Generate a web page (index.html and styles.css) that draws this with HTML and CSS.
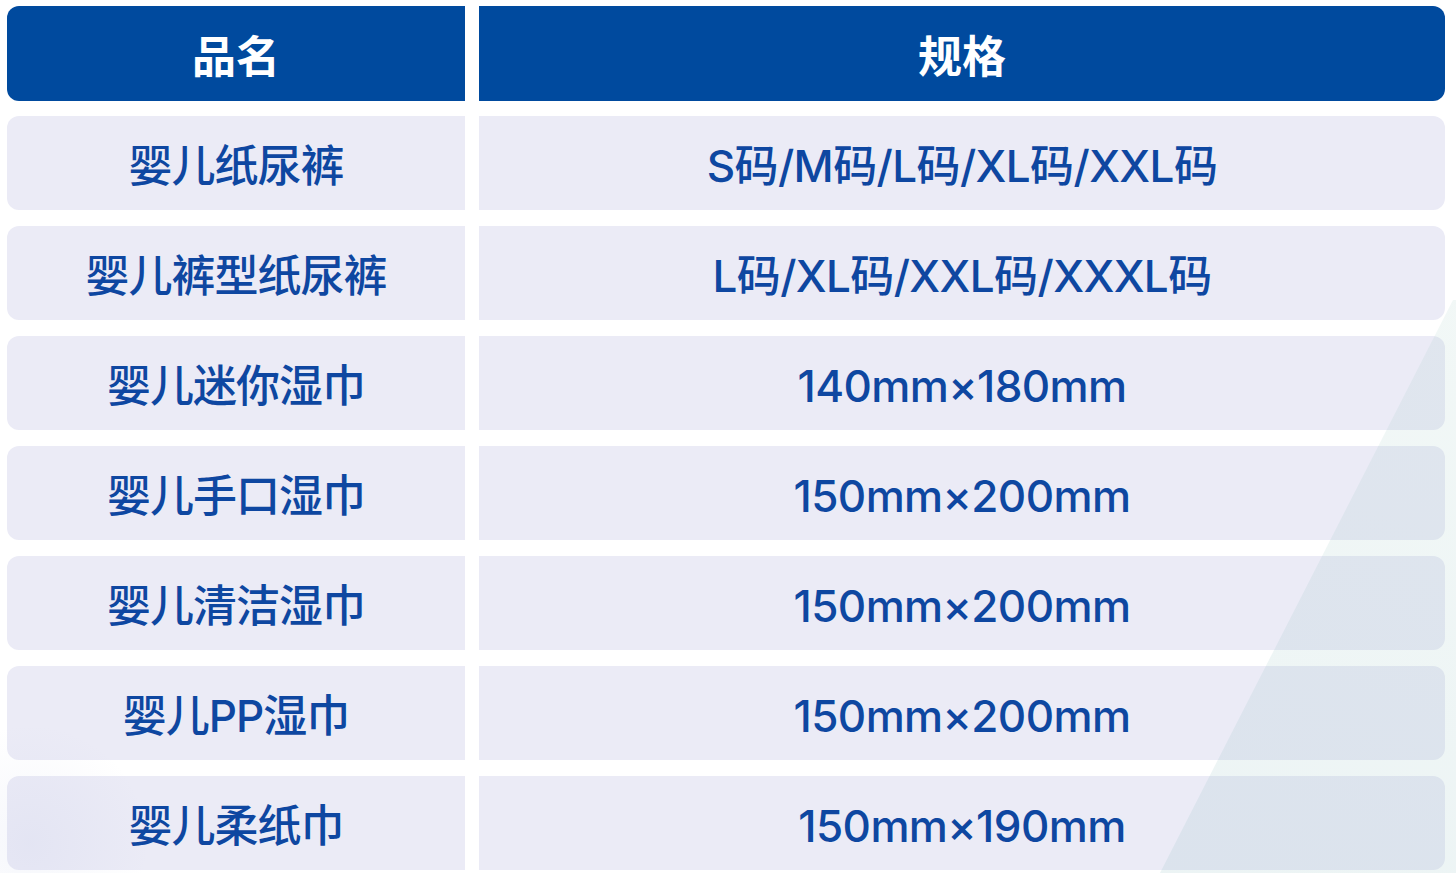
FILE: index.html
```html
<!DOCTYPE html>
<html lang="zh-CN">
<head>
<meta charset="utf-8">
<title>规格表</title>
<link rel="stylesheet" href="styles.css">
</head>
<body>
<div class="page">
  <div class="table">
    <div class="cell head left">品名</div>
    <div class="cell head right">规格</div>

    <div class="cell left">婴儿纸尿裤</div>
    <div class="cell right">S码/M码/L码/XL码/XXL码</div>

    <div class="cell left">婴儿裤型纸尿裤</div>
    <div class="cell right">L码/XL码/XXL码/XXXL码</div>

    <div class="cell left">婴儿迷你湿巾</div>
    <div class="cell right num">140mm×180mm</div>

    <div class="cell left">婴儿手口湿巾</div>
    <div class="cell right num">150mm×200mm</div>

    <div class="cell left">婴儿清洁湿巾</div>
    <div class="cell right num">150mm×200mm</div>

    <div class="cell left">婴儿PP湿巾</div>
    <div class="cell right num">150mm×200mm</div>

    <div class="cell left">婴儿柔纸巾</div>
    <div class="cell right num">150mm×190mm</div>
  </div>
  <div class="sheen"></div>
  <div class="haze"></div>
</div>
</body>
</html>
```

FILE: styles.css
```css
html, body {
  margin: 0;
  padding: 0;
  background: #ffffff;
}

.page {
  position: relative;
  width: 1456px;
  height: 873px;
  overflow: hidden;
  box-sizing: border-box;
  padding: 6px 11px 0 7px;
  font-family: Inter, "Noto Sans CJK SC", sans-serif;
}

.table {
  display: grid;
  grid-template-columns: 458px 966px;
  grid-auto-rows: 94px;
  column-gap: 14px;
  row-gap: 16px;
}

.cell {
  display: flex;
  align-items: center;
  justify-content: center;
  background: #ebebf6;
  color: #0e47a1;
  font-size: 44px;
  font-weight: 500;
  letter-spacing: -1px;
}

.cell.left {
  border-radius: 12px 0 0 12px;
}

.cell.right {
  border-radius: 0 12px 12px 0;
  letter-spacing: -0.6px;
}

.cell.num {
  padding-top: 6px;
  box-sizing: border-box;
}

.cell.head {
  background: #004a9e;
  color: #ffffff;
  font-size: 44px;
  font-weight: 700;
  letter-spacing: 0;
  height: 95px;
}

.sheen {
  position: absolute;
  inset: 0;
  pointer-events: none;
  background: linear-gradient(200deg, rgba(150, 200, 180, 0.10), rgba(130, 180, 190, 0.18));
  clip-path: polygon(1453px 300px, 1456px 300px, 1456px 873px, 1160px 873px);
}

.haze {
  position: absolute;
  left: -90px;
  bottom: -90px;
  width: 240px;
  height: 240px;
  pointer-events: none;
  background: radial-gradient(circle, rgba(150, 165, 215, 0.09), rgba(150, 165, 215, 0) 70%);
}
```
